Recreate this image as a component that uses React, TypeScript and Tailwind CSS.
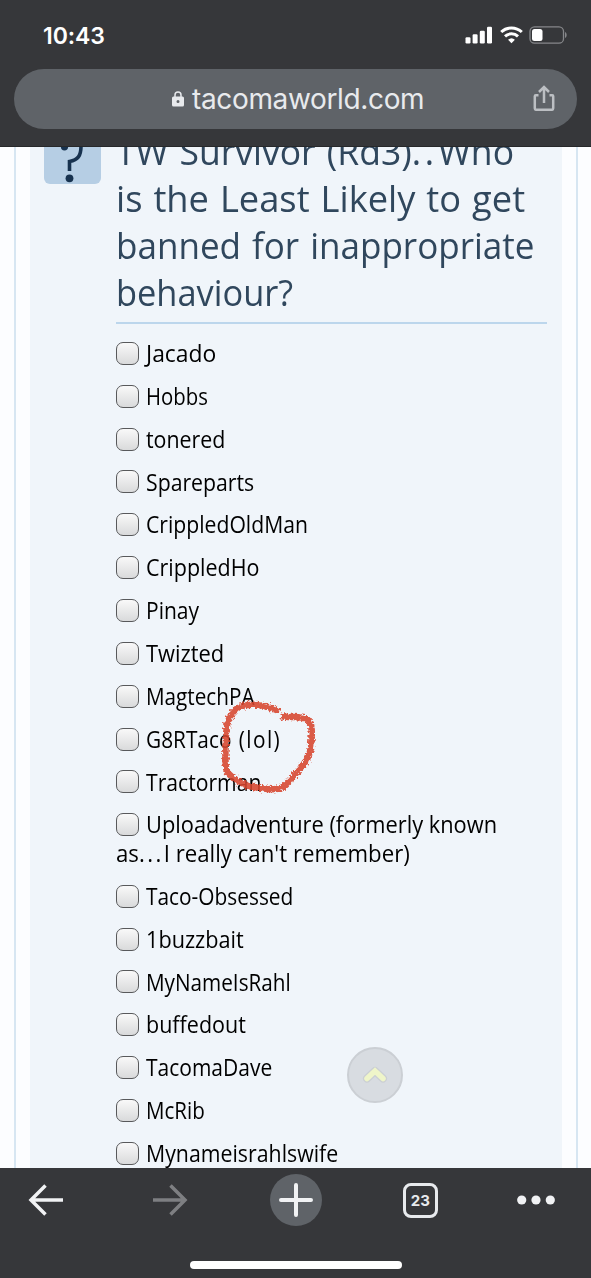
import React from "react";

type Option = { text: string; fit: string; note?: string; more?: string };

const options: Option[] = [
  { text: "Jacado", fit: "scale-x-[0.995]" },
  { text: "Hobbs", fit: "scale-x-[0.885]" },
  { text: "tonered", fit: "scale-x-[0.93]" },
  { text: "Spareparts", fit: "scale-x-[0.923]" },
  { text: "CrippledOldMan", fit: "scale-x-[0.92]" },
  { text: "CrippledHo", fit: "scale-x-[0.934]" },
  { text: "Pinay", fit: "scale-x-[0.914]" },
  { text: "Twizted", fit: "scale-x-[0.951]" },
  { text: "MagtechPA", fit: "scale-x-[0.90]" },
  { text: "G8RTaco", note: "(lol)", fit: "scale-x-[0.905]" },
  { text: "Tractorman", fit: "scale-x-[0.92]" },
  { text: "Uploadadventure (formerly known", more: "I really can't remember)", fit: "scale-x-[0.949]" },
  { text: "Taco-Obsessed", fit: "scale-x-[0.907]" },
  { text: "1buzzbait", fit: "scale-x-[0.942]" },
  { text: "MyNameIsRahl", fit: "scale-x-[0.90]" },
  { text: "buffedout", fit: "scale-x-[0.935]" },
  { text: "TacomaDave", fit: "scale-x-[0.913]" },
  { text: "McRib", fit: "scale-x-[0.894]" },
  { text: "Mynameisrahlswife", fit: "scale-x-[0.927]" },
];

function StatusBar() {
  return (
    <div className="flex h-[69px] items-start justify-between pl-[43px] pr-[23px] pt-[22px]">
      <span className="font-['Inter',sans-serif] text-[23px] leading-[28px] font-semibold tracking-[-0.1px] text-white">10:43</span>
      <div className="flex items-center gap-[6.5px] pt-[4px]">
        <svg width="28" height="18" viewBox="0 0 28 18" fill="#fff" className="-ml-px">
          <rect x="0.5" y="11.200" width="5" height="6.300" rx="1.2" />
          <rect x="7.600" y="8.200" width="5" height="9.300" rx="1.2" />
          <rect x="14.800" y="4.700" width="5" height="12.800" rx="1.2" />
          <rect x="22" y="0.700" width="5" height="16.800" rx="1.2" />
        </svg>
        <svg width="23" height="18" viewBox="0 0 23 18" fill="none" stroke="#fff" strokeWidth="3">
          <path d="M1.2 6a15 15 0 0 1 20.6 0" />
          <path d="M5 10.400a9.400 9.400 0 0 1 13 0" />
          <path d="M11.500 17.200l-3.400-3.400a5 5 0 0 1 6.800 0z" fill="#fff" stroke="none" />
        </svg>
        <svg width="39" height="18" viewBox="0 0 39 18">
          <rect x="1" y="0.8" width="33.500" height="16.4" rx="4.5" fill="none" stroke="#86878a" strokeWidth="1.3" />
          <rect x="3" y="3" width="10.5" height="12" rx="2.5" fill="#fff" />
          <path d="M36 6c2.200.8 2.200 5.200 0 6z" fill="#86878a" />
        </svg>
      </div>
    </div>
  );
}

function AddressBar() {
  return (
    <div className="mx-[14px] flex h-[60px] items-center rounded-full bg-[#5f6368] pl-[158px] pr-[22px]">
      <svg width="12" height="16" viewBox="0 0 12 16">
        <path d="M3 6V4a3 3 0 0 1 6 0v2" fill="none" stroke="#e8eaed" strokeWidth="1.500" />
        <path fillRule="evenodd" d="M1.500 5.500h9A1.500 1.500 0 0 1 12 7v7a1.500 1.500 0 0 1-1.500 1.500h-9A1.500 1.500 0 0 1 0 14V7a1.500 1.500 0 0 1 1.500-1.500zM6 9a1.500 1.500 0 1 0 0 3 1.500 1.500 0 0 0 0-3z" fill="#e8eaed" />
      </svg>
      <span className="ml-[8px] font-['Inter',sans-serif] text-[28px] leading-[34px] tracking-[-0.35px] text-[#e8eaed]">tacomaworld.com</span>
      <svg width="22" height="26" viewBox="0 0 22 26" className="mt-[-3px] ml-auto" fill="none" stroke="#bcbfc3" strokeWidth="2.500">
        <path d="M5.500 10.200H2.800a1 1 0 0 0-1 1v12a1.600 1.600 0 0 0 1.600 1.600h15.200a1.600 1.600 0 0 0 1.600-1.600v-12a1 1 0 0 0-1-1h-2.700" />
        <path d="M11 18V2.500M6 7l5-5 5 5" />
      </svg>
    </div>
  );
}

function Poll() {
  return (
    <main className="relative flex h-[1021px] overflow-hidden bg-[#fcfdff] font-['Open_Sans','Noto_Sans',sans-serif]">
      <div className="mx-[14px] flex w-[564px] shrink-0 border-x-2 border-[#d7e6f2] px-[14px]">
        <div className="flex w-full items-start bg-[#f0f5fa] pl-[14px]">
          <div className="mt-[-20px] h-[57px] w-[57px] shrink-0 rounded-[6px] bg-[#b6cee4]">
            <svg width="57" height="57" viewBox="0 0 57 57">
              <path d="M19 15C24 7 37 8 37 19C37 29 34 33 25.500 34.500V44" fill="none" stroke="#17324f" strokeWidth="3.600" />
              <circle cx="20.500" cy="19.800" r="3.600" fill="#17324f" />
              <circle cx="25.500" cy="51.300" r="3.900" fill="#17324f" />
            </svg>
          </div>
          <div className="ml-[15px] w-[431px] shrink-0">
            <h1 className="mt-[-20px] border-b-2 border-[#bcd6ec] pb-[7px] text-[37px] leading-[47px] whitespace-nowrap text-[#30475d]">
              <span className="block origin-left scale-x-[0.96] [word-spacing:2px]">
                TW Survivor (Rd3)<span className="tracking-[4px]">..</span>Who
              </span>
              <span className="block origin-left scale-x-[0.98] [word-spacing:1.6px]">is the Least Likely to get</span>
              <span className="block origin-left scale-x-[0.947] [word-spacing:2px]">banned for inappropriate</span>
              <span className="block origin-left scale-x-[0.93]">behaviour?</span>
            </h1>
            <ul className="flex flex-col gap-[14.270px] pt-[15px] text-[23px] leading-[28.600px] whitespace-nowrap text-black">
              {options.map((o) => (
                <li key={o.text}>
                  <label className="flex h-[28.600px] items-center">
                    <span className="mr-[6.500px] h-[23px] w-[23px] shrink-0 rounded-[7px] border-[1.500px] border-[#58595b] bg-linear-to-b from-[#f9f9f9] to-[#d9dadb]" />
                    <span className={`origin-left ${o.fit}`}>
                      {o.text}
                      {o.note && <span className="ml-[8px] tracking-[1.6px]">{o.note}</span>}
                    </span>
                  </label>
                  {o.more && (
                    <span className="block origin-left scale-x-[0.966]">
                      as<span className="tracking-[2.500px]">...</span>{o.more}
                    </span>
                  )}
                </li>
              ))}
            </ul>
          </div>
        </div>
      </div>

      <svg className="pointer-events-none absolute top-[547px] left-[214px]" width="110" height="105" viewBox="214 694 110 105" fill="none">
        <defs>
          <filter id="crayon" x="-10%" y="-10%" width="120%" height="120%">
            <feTurbulence type="fractalNoise" baseFrequency="0.45" numOctaves="2" seed="4" result="grain" />
            <feDisplacementMap in="SourceGraphic" in2="grain" scale="6" xChannelSelector="R" yChannelSelector="G" />
          </filter>
        </defs>
        <path
          d="M279 711C263 704 248 703 239 707C228 714 226 725 226 740C225 754 225 765 227 772C236 783 252 788 268 789C281 790 286 787 293 777C301 767 310 759 311 747C312 733 313 724 307 719C300 716 291 718 281 716"
          stroke="#d7432c" strokeWidth="6.500" strokeOpacity="0.88" strokeLinejoin="round" filter="url(#crayon)"
        />
      </svg>

      <button aria-label="Scroll to top" className="absolute top-[900px] left-[347px] flex h-[56px] w-[56px] items-center justify-center rounded-full border-2 border-[#cbcfd4] bg-[#d8dce1]">
        <svg width="26" height="20" viewBox="0 0 26 20" fill="none">
          <path d="M5 13.500L13 6L21 13.500" stroke="#cbcfd4" strokeWidth="8" strokeLinecap="round" strokeLinejoin="round" />
          <path d="M5 13.500L13 6L21 13.500" stroke="#eff5c9" strokeWidth="5.500" strokeLinecap="round" />
        </svg>
      </button>
    </main>
  );
}

function Toolbar() {
  return (
    <footer className="flex h-[110px] flex-col items-center bg-[#36373a]">
      <div className="flex h-[64px] w-full items-center pl-[28px]">
        <svg width="36" height="32" viewBox="0 0 36 32" fill="none" stroke="#f1f2f4" strokeWidth="3.500">
          <path d="M35 16H3M17.500 1.500L3 16l14.500 14.500" />
        </svg>
        <svg width="36" height="32" viewBox="0 0 36 32" fill="none" stroke="#7e7f82" strokeWidth="3.500" className="ml-[88px]">
          <path d="M1 16h32M18.500 1.500L33 16 18.500 30.500" />
        </svg>
        <div className="ml-[82px] flex h-[52px] w-[52px] items-center justify-center rounded-full bg-[#5f6368]">
          <svg width="34" height="34" viewBox="0 0 34 34" stroke="#f1f2f4" strokeWidth="4" strokeLinecap="round">
            <path d="M17 2v30M2 17h30" />
          </svg>
        </div>
        <div className="ml-[81px] flex h-[35px] w-[35px] items-center justify-center rounded-[8px] border-[3px] border-[#e8eaed] font-['Inter',sans-serif] text-[15px] leading-none font-bold tracking-[0.3px] text-[#e8eaed]">23</div>
        <svg width="38" height="10" viewBox="0 0 38 10" fill="#f1f2f4" className="ml-[79px]">
          <circle cx="4.700" cy="5" r="4.600" />
          <circle cx="19" cy="5" r="4.600" />
          <circle cx="33.300" cy="5" r="4.600" />
        </svg>
      </div>
      <div className="mt-[29px] h-[8px] w-[212px] rounded-full bg-white" />
    </footer>
  );
}

export default function App() {
  return (
    <div className="h-[1278px] w-[591px] overflow-hidden bg-[#36373a]">
      <header className="h-[147px] border-b border-[#27282a] bg-[#36373a]">
        <StatusBar />
        <AddressBar />
      </header>
      <Poll />
      <Toolbar />
    </div>
  );
}
